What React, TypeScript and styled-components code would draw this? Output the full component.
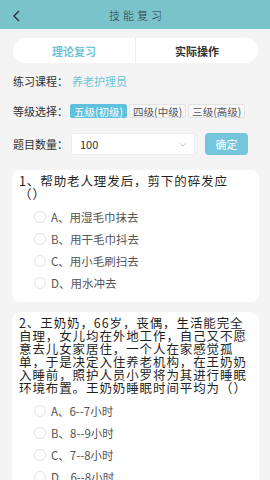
import * as React from 'react';
import styled, { createGlobalStyle } from 'styled-components';

const GlobalStyle = createGlobalStyle`
  html, body {
    margin: 0;
    padding: 0;
  }
  body {
    font-family: "Noto Sans CJK SC", "Noto Sans", sans-serif;
    background: #f4f4f4;
  }
`;

const Page = styled.div`
  width: 270px;
  height: 480px;
  overflow: hidden;
  background: #f4f4f4;
`;

const Header = styled.div`
  height: 29px;
  background: #7ac3cb;
  display: flex;
  align-items: center;
  justify-content: center;
  position: relative;
`;

const BackButton = styled.div`
  position: absolute;
  left: 11px;
  top: 9px;
  width: 12px;
  height: 14px;
  display: flex;
`;

const Title = styled.div`
  font-size: 11px;
  font-weight: 300;
  letter-spacing: 3px;
  color: #2c3a3c;
  margin-left: 4px;
`;

const Tabs = styled.div`
  margin: 9px 12px 0 13px;
  height: 25px;
  border-radius: 13px;
  background: #fff;
  display: flex;
  overflow: hidden;
`;

const Tab = styled.div<{ $active?: boolean }>`
  flex: 1;
  display: flex;
  align-items: center;
  justify-content: center;
  font-size: 11px;
  font-weight: 700;
  color: ${(p) => (p.$active ? '#72c3d5' : '#333')};
  & + & {
    border-left: 1px solid #eeeeee;
  }
`;

const FormRow = styled.div<{ $h: number; $top: number }>`
  display: flex;
  align-items: center;
  height: ${(p) => p.$h}px;
  margin: ${(p) => p.$top}px 0 0 13px;
`;

const Label = styled.div`
  width: 57px;
  flex-shrink: 0;
  font-size: 11px;
  color: #333;
`;

const Course = styled.div`
  font-size: 11px;
  color: #6cc4d9;
  margin-left: 2px;
`;

const Tags = styled.div`
  display: flex;
  gap: 2px;
`;

const Tag = styled.div<{ $active?: boolean }>`
  height: 14px;
  box-sizing: border-box;
  padding: 0 3px;
  display: flex;
  align-items: center;
  font-size: 10.5px;
  border: 1px solid ${(p) => (p.$active ? '#5fc1dd' : '#e4e4e4')};
  background: ${(p) => (p.$active ? '#5fc1dd' : '#f8f8f8')};
  color: ${(p) => (p.$active ? '#fff' : '#555')};
  border-radius: 2px;
`;

const Select = styled.div`
  width: 124px;
  height: 22px;
  box-sizing: border-box;
  margin-left: 1px;
  background: #fff;
  border: 1px solid #ededed;
  border-radius: 3px;
  display: flex;
  align-items: center;
  justify-content: space-between;
  padding: 0 7px 0 8px;
  font-size: 11px;
  color: #333;
`;

const ConfirmButton = styled.div`
  width: 43px;
  height: 22px;
  margin-left: 10px;
  border-radius: 4px;
  background: #73c6dc;
  color: #fff;
  font-size: 11px;
  display: flex;
  align-items: center;
  justify-content: center;
`;

const Card = styled.div<{ $top: number }>`
  margin: ${(p) => p.$top}px 11px 0 12px;
  background: #fff;
  border-radius: 8px;
  padding: 4px 8px 8px 7px;
`;

const Question = styled.div`
  max-width: 230px;
  font-size: 12.5px;
  letter-spacing: 0.9px;
  line-height: 13px;
  font-weight: 400;
  color: #1f1f1f;
  margin-bottom: 6px;
  text-spacing-trim: space-all;
`;

const Option = styled.div`
  height: 22px;
  display: flex;
  align-items: center;
  padding-left: 15px;
  font-size: 11.5px;
  color: #555;
`;

const Radio = styled.span`
  width: 10px;
  height: 10px;
  border-radius: 50%;
  border: 1px solid #e2e2e2;
  margin-right: 5px;
  flex-shrink: 0;
`;

type QuestionData = { text: string; options: string[] };

const questions: QuestionData[] = [
  {
    text: '1、帮助老人理发后，剪下的碎发应（）',
    options: ['A、用湿毛巾抹去', 'B、用干毛巾抖去', 'C、用小毛刷扫去', 'D、用水冲去'],
  },
  {
    text: '2、王奶奶，66岁，丧偶，生活能完全自理，女儿均在外地工作，自己又不愿意去儿女家居住，一个人在家感觉孤单，于是决定入住养老机构，在王奶奶入睡前，照护人员小罗将为其进行睡眠环境布置。王奶奶睡眠时间平均为（）',
    options: ['A、6--7小时', 'B、8--9小时', 'C、7--8小时', 'D、6--8小时'],
  },
];

export default function App() {
  return (
    <Page>
      <GlobalStyle />
      <Header>
        <BackButton>
          <svg width="12" height="14" viewBox="0 0 12 14">
            <polyline points="8,2 3,7 8,12" fill="none" stroke="#1f2a2c" strokeWidth="1.3" />
          </svg>
        </BackButton>
        <Title>技能复习</Title>
      </Header>

      <Tabs>
        <Tab $active>理论复习</Tab>
        <Tab>实际操作</Tab>
      </Tabs>

      <FormRow $h={14} $top={11}>
        <Label>练习课程：</Label>
        <Course>养老护理员</Course>
      </FormRow>

      <FormRow $h={14} $top={16}>
        <Label>等级选择：</Label>
        <Tags>
          <Tag $active>五级(初级)</Tag>
          <Tag>四级(中级)</Tag>
          <Tag>三级(高级)</Tag>
        </Tags>
      </FormRow>

      <FormRow $h={22} $top={15}>
        <Label>题目数量：</Label>
        <Select>
          <span>100</span>
          <svg width="8" height="5" viewBox="0 0 8 5">
            <polyline points="1,1 4,4 7,1" fill="none" stroke="#c4c4c4" strokeWidth="1" />
          </svg>
        </Select>
        <ConfirmButton>确定</ConfirmButton>
      </FormRow>

      {questions.map((q, i) => (
        <Card key={i} $top={i === 0 ? 15 : 10}>
          <Question>{q.text}</Question>
          {q.options.map((o) => (
            <Option key={o}>
              <Radio />
              {o}
            </Option>
          ))}
        </Card>
      ))}
    </Page>
  );
}
